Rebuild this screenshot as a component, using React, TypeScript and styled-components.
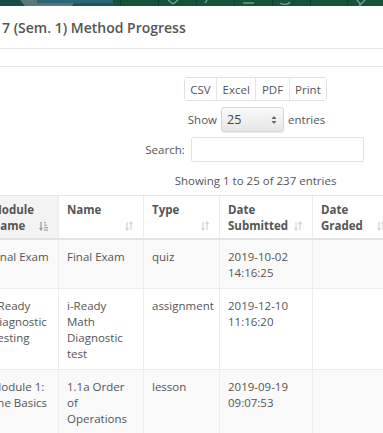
import React from "react";
import styled, { createGlobalStyle } from "styled-components";

const Global = createGlobalStyle`
  html, body { margin: 0; padding: 0; background: #fff; }
  body {
    font-family: "Open Sans", "Noto Sans", sans-serif;
    color: #555;
    font-size: 11.5px;
    line-height: 16px;
    overflow: hidden;
  }
`;

const Page = styled.div`
  width: 383px;
  height: 433px;
  overflow: hidden;
`;

const Banner = styled.svg`
  display: block;
`;

const TitleBar = styled.div`
  height: 43px;
  box-sizing: border-box;
  border-bottom: 1px solid #e6e6e6;
  display: flex;
  align-items: center;
  padding: 2px 0 0 2px;
`;

const Title = styled.h3`
  margin: 0;
  font-size: 14px;
  font-weight: 600;
  color: #555;
  line-height: 20px;
`;

const Divider = styled.div`
  height: 18px;
  box-sizing: border-box;
  border-bottom: 1px solid #e6e6e6;
`;

const Controls = styled.div`
  padding: 10px 0 0 128px;
  width: 253px;
  display: flex;
  flex-direction: column;
  align-items: center;
`;

const BtnGroup = styled.div`
  display: flex;
  border: 1px solid #e0e0e0;
  border-radius: 3px;
  margin-left: 2px;
`;

const Btn = styled.button<{ $first?: boolean }>`
  font-family: inherit;
  font-size: 11.5px;
  color: #555;
  background: #fff;
  border: none;
  border-left: ${(p) => (p.$first ? "none" : "1px solid #e6e6e6")};
  height: 22px;
  padding: 0 5.5px;
  margin: 0;
`;

const LengthRow = styled.label`
  display: flex;
  align-items: center;
  gap: 4px;
  margin-top: 6px;
  margin-left: 4px;
`;

const Select = styled.div`
  width: 63px;
  height: 25px;
  box-sizing: border-box;
  border: 1px solid #d4d4d4;
  border-radius: 3px;
  background: linear-gradient(#fafafa, #e6e6e6);
  box-shadow: 0 1px 1px rgba(0, 0, 0, 0.08);
  display: flex;
  align-items: center;
  justify-content: space-between;
  padding: 0 6px 0 5px;
  font-size: 12.5px;
  color: #444;
`;

const SearchRow = styled.label`
  display: flex;
  align-items: center;
  gap: 6px;
  margin-top: 5px;
`;

const Input = styled.div`
  width: 173px;
  height: 25px;
  box-sizing: border-box;
  border: 1px solid #e0e0e0;
  border-radius: 2px;
  background: #fff;
`;

const Info = styled.div`
  margin-top: 11px;
  margin-left: 2px;
`;

const TableWrap = styled.div`
  margin-top: 6px;
  overflow: hidden;
  width: 383px;
`;

const Table = styled.table`
  border-collapse: collapse;
  table-layout: fixed;
  margin-left: -18px;
  width: 412px;
  border-top: 1px solid #e6e6e6;
`;

const Th = styled.th<{ $sorted?: boolean }>`
  position: relative;
  text-align: left;
  vertical-align: top;
  font-weight: 700;
  color: #555;
  padding: 6px 16px 4px 8px;
  border-left: 1px solid #ececec;
  border-bottom: 2px solid #e2e2e2;
  background: ${(p) => (p.$sorted ? "#f3f3f3" : "#fff")};
  line-height: 16px;
`;

const SortIcon = styled.svg`
  position: absolute;
  right: 10px;
  bottom: 7px;
`;

const Tr = styled.tr<{ $odd?: boolean }>`
  background: ${(p) => (p.$odd ? "#f9f9f9" : "#fff")};
`;

const Td = styled.td<{ $tight?: boolean }>`
  vertical-align: top;
  padding: 9px ${(p) => (p.$tight ? "4px" : "10px")} 7px 8px;
  border-left: 1px solid #ececec;
  border-bottom: 1px solid #ececec;
  line-height: 16px;
  color: #555;
`;

const Both = () => (
  <SortIcon width="8" height="10" viewBox="0 0 8 10">
    <g stroke="#d6d6d6" strokeWidth="1.3" fill="none">
      <path d="M2 1v8M0.5 7l1.5 2 1.5-2" />
      <path d="M6 9V1M4.5 3L6 1l1.5 2" />
    </g>
  </SortIcon>
);

const Asc = () => (
  <SortIcon width="9" height="10" viewBox="0 0 9 10">
    <g stroke="#999" strokeWidth="1.2" fill="none">
      <path d="M2 1v8M0.5 7l1.5 2 1.5-2" />
    </g>
    <g fill="#aaa">
      <rect x="5" y="1" width="2" height="1.3" />
      <rect x="5" y="3.5" width="3" height="1.3" />
      <rect x="5" y="6" width="4" height="1.3" />
      <rect x="5" y="8.5" width="4" height="1.3" />
    </g>
  </SortIcon>
);

const rows = [
  { module: "Final Exam", name: "Final Exam", type: "quiz", sub: "2019-10-02 14:16:25", graded: "" },
  { module: "i-Ready Diagnostic Testing", name: "i-Ready Math Diagnostic test", type: "assignment", sub: "2019-12-10 11:16:20", graded: "" },
  { module: "Module 1: The Basics", name: "1.1a Order of Operations", type: "lesson", sub: "2019-09-19 09:07:53", graded: "" },
  { module: "Module 1: The Basics", name: "1.1b Order of Operations", type: "lesson", sub: "2019-09-19 09:20:11", graded: "" },
];

const BannerArt = () => (
  <Banner width="383" height="6" viewBox="0 0 383 6">
    <rect width="383" height="6" fill="#16513a" />
    <rect width="24" height="6" fill="#1b4a46" />
    <polygon points="20,0 76,0 72,6 25,6" fill="#5b797a" />
    <rect x="37" y="0" width="76" height="3.5" fill="#2a6676" />
    <rect x="76" y="3.5" width="40" height="2.5" fill="#1d5748" />
    {[120, 158, 196, 234, 272, 310, 347].map((x) => (
      <rect key={x} x={x} y="0" width="1" height="6" fill="#0f3e2c" />
    ))}
    <g stroke="#7d9c8e" strokeWidth="1.4" fill="none">
      <path d="M168 0l5 4M178 0l-5 4" />
      <path d="M207 0l-2 3" />
      <path d="M243 3h11" />
      <path d="M280 3c3 2 8 2 10-1" />
      <path d="M357 0l4 5M365 0l-6 6" />
    </g>
  </Banner>
);

export default function App() {
  return (
    <Page>
      <Global />
      <BannerArt />
      <TitleBar>
        <Title>7 (Sem. 1) Method Progress</Title>
      </TitleBar>
      <Divider />
      <Controls>
        <BtnGroup>
          <Btn $first>CSV</Btn>
          <Btn>Excel</Btn>
          <Btn>PDF</Btn>
          <Btn>Print</Btn>
        </BtnGroup>
        <LengthRow>
          Show
          <Select>
            <span>25</span>
            <svg width="6" height="10" viewBox="0 0 6 10">
              <path d="M0.5 4L3 1l2.5 3z M0.5 6l2.5 3 2.5-3z" fill="#666" />
            </svg>
          </Select>
          entries
        </LengthRow>
        <SearchRow>
          Search:
          <Input />
        </SearchRow>
        <Info>Showing 1 to 25 of 237 entries</Info>
      </Controls>
      <TableWrap>
        <Table>
          <colgroup>
            <col style={{ width: 76 }} />
            <col style={{ width: 85 }} />
            <col style={{ width: 76 }} />
            <col style={{ width: 93 }} />
            <col style={{ width: 82 }} />
          </colgroup>
          <thead>
            <tr>
              <Th $sorted>
                Module Name
                <Asc />
              </Th>
              <Th>
                Name
                <Both />
              </Th>
              <Th>
                Type
                <Both />
              </Th>
              <Th>
                Date Submitted
                <Both />
              </Th>
              <Th>
                Date Graded
                <Both />
              </Th>
            </tr>
          </thead>
          <tbody>
            {rows.map((r, i) => (
              <Tr key={i} $odd={i % 2 === 0}>
                <Td $tight>{r.module}</Td>
                <Td>{r.name}</Td>
                <Td>{r.type}</Td>
                <Td>{r.sub}</Td>
                <Td>{r.graded}</Td>
              </Tr>
            ))}
          </tbody>
        </Table>
      </TableWrap>
    </Page>
  );
}
